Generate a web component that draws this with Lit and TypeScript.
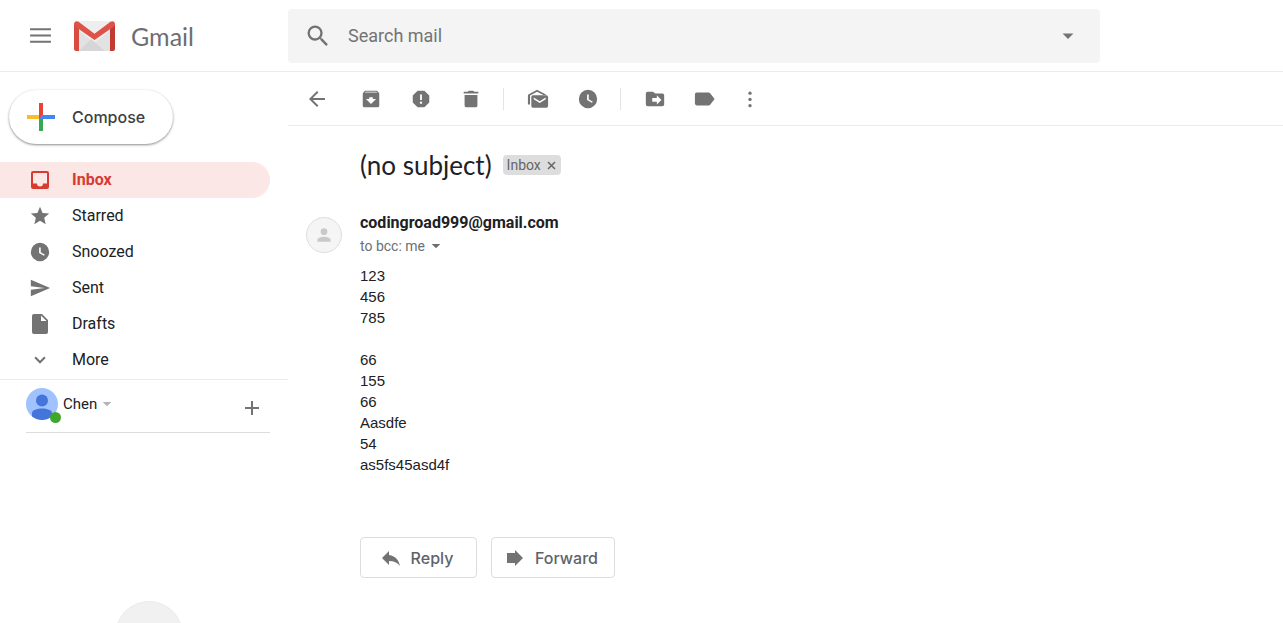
import { LitElement, html, css, svg } from "lit";
import { customElement, property } from "lit/decorators.js";
import { classMap } from "lit/directives/class-map.js";

const paths: Record<string, unknown> = {
  menu: svg`<path d="M2 5h20v2H2zM2 11h20v2H2zM2 17h20v2H2z"/>`,
  search: svg`<path d="M15.5 14h-.79l-.28-.27A6.47 6.47 0 0 0 16 9.5 6.5 6.5 0 1 0 9.5 16c1.61 0 3.09-.59 4.23-1.57l.27.28v.79l5 4.99L20.49 19l-4.99-5zm-6 0a4.5 4.5 0 1 1 0-9 4.5 4.5 0 0 1 0 9z"/>`,
  caret: svg`<path d="M5.500 9h13l-6.500 6.500z"/>`,
  back: svg`<path d="M20 11H7.800l5.600-5.600L12 4l-8 8 8 8 1.400-1.400L7.800 13H20z"/>`,
  archive: svg`<path fill-rule="evenodd" d="M20.500 5.200l-1.400-1.700C18.900 3.200 18.500 3 18 3H6c-.5 0-.9.200-1.200.500L3.500 5.200C3.200 5.600 3 6 3 6.500V19a2 2 0 0 0 2 2h14a2 2 0 0 0 2-2V6.500c0-.5-.2-.9-.5-1.300zM12 17.500L6.500 12H10v-2h4v2h3.500zM5.100 5l.8-1h12l.9 1z"/>`,
  spam: svg`<path fill-rule="evenodd" d="M15.700 3H8.300L3 8.300v7.400L8.300 21h7.400l5.300-5.300V8.300zM12 17.300a1.300 1.300 0 1 1 0-2.600 1.300 1.300 0 0 1 0 2.600zm1-4.300h-2V7h2z"/>`,
  trash: svg`<path d="M5 7.500h14V19a2 2 0 0 1-2 2H7a2 2 0 0 1-2-2zM20 4h-4.500l-1-1h-5l-1 1H4v2h16z"/>`,
  unread: svg`<path d="M3.300 18H1V8.200c0-.7.300-1.200.9-1.500L11 1.800l9 4.900c.4.200.6.500.8.900h-3L11 4 3.300 8.200z"/><path fill-rule="evenodd" d="M6.500 8h14.700A1.800 1.800 0 0 1 23 9.800v9.900a1.800 1.800 0 0 1-1.800 1.800H6.500a1.800 1.800 0 0 1-1.800-1.800V9.800A1.800 1.800 0 0 1 6.500 8zm7.400 6.400L7.300 10.300v1.900l6.600 4.100 6.500-4.100v-1.900z"/>`,
  clock: svg`<path fill-rule="evenodd" d="M12 2a10 10 0 1 0 0 20 10 10 0 0 0 0-20zm4.200 14.200L11 13V7h1.800v5.200l4.500 2.700z"/>`,
  move: svg`<path fill-rule="evenodd" d="M20 6h-8l-2-2H4a2 2 0 0 0-2 2v12a2 2 0 0 0 2 2h16a2 2 0 0 0 2-2V8a2 2 0 0 0-2-2zm-6 12v-3H9v-4h5V8l5 5z"/>`,
  tag: svg`<path d="M17.600 5.800A2 2 0 0 0 16 5H3a2 2 0 0 0-2 2v10a2 2 0 0 0 2 2h13c.7 0 1.300-.3 1.600-.8L22.500 12z"/>`,
  more: svg`<circle cx="12" cy="5" r="2"/><circle cx="12" cy="12.500" r="2"/><circle cx="12" cy="20" r="2"/>`,
  inbox: svg`<path fill-rule="evenodd" d="M19 3H5a2 2 0 0 0-2 2v14a2 2 0 0 0 2 2h14a2 2 0 0 0 2-2V5a2 2 0 0 0-2-2zm0 12.500h-4a3 3 0 0 1-6 0H5V5h14z"/>`,
  star: svg`<path d="M12 17.300L18.200 21l-1.600-7L22 9.200l-7.200-.6L12 2 9.200 8.600 2 9.200 7.500 14l-1.700 7z"/>`,
  sent: svg`<path d="M2 21L23 12 2 3v7l15 2-15 2z"/>`,
  draft: svg`<path fill-rule="evenodd" d="M14 2H6a2 2 0 0 0-2 2v16a2 2 0 0 0 2 2h12a2 2 0 0 0 2-2V8zm-1 7V3.500L18.500 9z"/>`,
  chevron: svg`<path d="M16.600 8.200L12 12.800 7.400 8.200 5.800 9.800l6.200 6.200 6.200-6.200z"/>`,
  plus: svg`<path d="M19 13h-6v6h-2v-6H5v-2h6V5h2v6h6z"/>`,
  person: svg`<circle cx="12" cy="8" r="4"/><path d="M12 14c-2.700 0-8 1.300-8 4v2h16v-2c0-2.700-5.300-4-8-4z"/>`,
  reply: svg`<path d="M10 9V5l-7 7 7 7v-4.100c5 0 8.500 1.600 11 5.100-1-5-4-10-11-11z"/>`,
  forward: svg`<path d="M4 7h8V4l8 8-8 8v-3H4z"/>`,
};

@customElement("mail-icon")
class MailIcon extends LitElement {
  @property() name = "";

  static styles = css`
    :host { display: inline-block; flex: none; width: 20px; height: 20px; }
    .glyph { display: block; width: 100%; height: 100%; fill: currentColor; }
  `;

  render() {
    return html`<svg class="glyph" viewBox="0 0 24 24" aria-hidden="true">${paths[this.name]}</svg>`;
  }
}

@customElement("app-root")
class AppRoot extends LitElement {
  folders = [
    ["inbox", "Inbox"],
    ["star", "Starred"],
    ["clock", "Snoozed"],
    ["sent", "Sent"],
    ["draft", "Drafts"],
  ];

  tools = [
    [["archive", "Archive"], ["spam", "Report spam"], ["trash", "Delete"]],
    [["unread", "Mark as unread"], ["clock", "Snooze"]],
    [["move", "Move to"], ["tag", "Labels"]],
  ];

  body = ["123", "456", "785", "", "66", "155", "66", "Aasdfe", "54", "as5fs45asd4f"];

  static styles = css`
    :host {
      display: flex;
      flex-direction: column;
      height: 100vh;
      overflow: hidden;
      background: #fff;
      color: #202124;
      font: 16px/20px Roboto, sans-serif;
    }
    * { box-sizing: border-box; }
    button, input { font: inherit; color: inherit; background: none; border: 0; padding: 0; margin: 0; }
    button { cursor: pointer; }
    .icon-btn {
      display: flex; align-items: center; justify-content: center;
      width: 40px; height: 40px; color: #737373;
    }
    .header {
      display: flex; align-items: center; flex: none;
      height: 72px; border-bottom: 1px solid #ebebeb;
    }
    .brand { display: flex; align-items: center; flex: none; width: 288px; padding-left: 20px; }
    .menu mail-icon { width: 25px; height: 25px; }
    .logo-link { display: flex; align-items: center; gap: 16px; margin-left: 14px; color: #6b6f74; text-decoration: none; }
    .logo { display: block; width: 41px; height: 30px; }
    .logo-text { font: 25px/32px Lato, sans-serif; }
    .search {
      display: flex; align-items: center; flex: 1; max-width: 812px; height: 54px;
      padding: 0 12px 0 16px; border-radius: 4px; background: #f4f4f4; color: #737373;
    }
    .search-label { display: flex; }
    .search-label mail-icon { width: 28px; height: 28px; }
    .search-input { flex: 1; min-width: 0; margin-left: 16px; font-size: 18px; line-height: 24px; outline: 0; }
    .search-input::placeholder { color: #737373; opacity: 1; }
    .main { display: flex; flex: 1; min-height: 0; }
    .sidebar { display: flex; flex-direction: column; flex: none; width: 288px; overflow: hidden; }
    .compose {
      display: flex; align-items: center; gap: 17px; align-self: flex-start;
      height: 54px; margin: 18px 0 18px 9px; padding: 0 28px 0 18px;
      border-radius: 27px; color: #3c4043; font: 500 16px/24px Inter, sans-serif;
      box-shadow: 0 1px 2px rgba(60, 64, 67, 0.4), 0 1px 3px rgba(60, 64, 67, 0.25);
    }
    .compose-plus { width: 28px; height: 28px; }
    .nav { display: flex; flex-direction: column; flex: none; padding-bottom: 1px; }
    .nav-item {
      display: flex; align-items: center; gap: 20px; height: 36px; margin-right: 18px;
      padding-left: 28px; border-radius: 0 18px 18px 0; color: #202124; text-decoration: none;
    }
    .nav-item mail-icon { width: 24px; height: 22px; color: #737373; }
    .nav-item .tall { height: 24px; }
    .nav-item.active, .nav-item.active mail-icon { color: #d93a30; }
    .nav-item.active { background: #fbe7e6; font-weight: 700; }
    .chat {
      display: flex; align-items: center; flex: none; height: 53px;
      margin: 0 18px 0 26px; padding-bottom: 4px; border-bottom: 1px solid #dcdcdc;
    }
    .divider { flex: none; height: 1px; background: #ebebeb; }
    .avatar { position: relative; width: 32px; height: 32px; }
    .avatar-art { display: block; width: 32px; height: 32px; }
    .status { position: absolute; right: -3px; bottom: -3px; width: 11px; height: 11px; border-radius: 50%; background: #3fa82b; }
    .account { display: flex; align-items: center; gap: 2px; margin-left: 5px; font-size: 15px; }
    .account mail-icon { width: 16px; height: 16px; color: #b4b4b4; }
    .add { align-self: flex-end; margin-left: auto; width: 36px; }
    .add mail-icon, .icon-btn.back mail-icon { width: 24px; height: 24px; }
    .bubble { flex: none; align-self: center; width: 68px; height: 68px; margin: auto 0 -46px 10px; border-radius: 50%; background: #f1f1f1; border: 1px solid #ebebeb; }
    .content { flex: 1; min-width: 0; overflow: hidden; }
    .toolbar { display: flex; align-items: center; height: 54px; padding-left: 9px; border-bottom: 1px solid #ebebeb; }
    .group { display: flex; gap: 10px; padding: 0 12px 0 14px; }
    .group + .group { padding-left: 15px; position: relative; }
    .group + .group::before { content: ""; position: absolute; left: 0; top: 9px; height: 22px; width: 1px; background: #e4e4e4; }
    .group mail-icon { width: 22px; height: 22px; }
    .kebab { margin-left: -7px; }
    .subject { display: flex; align-items: center; gap: 11px; padding: 23px 0 0 72px; }
    .subject-text { margin: 0; font: 400 26px/32px Lato, sans-serif; }
    .label { display: flex; align-items: center; gap: 6px; height: 20px; padding: 0 5px 0 4px; border-radius: 4px; background: #ddd; color: #666; font-size: 14px; }
    .label-x { display: flex; }
    .cross { display: block; width: 9px; height: 9px; stroke: #666; stroke-width: 1.5; }
    .message { display: grid; grid-template-columns: 36px 1fr; column-gap: 18px; padding: 31px 16px 0 18px; }
    .sender-pic {
      display: flex; align-items: center; justify-content: center;
      width: 36px; height: 36px; margin-top: 5px; border-radius: 50%;
      background: #f5f5f5; border: 1px solid #dedede; color: #c9c9c9;
    }
    .sender { margin: 0; font-size: 16px; line-height: 22px; font-weight: 700; }
    .to { display: flex; align-items: center; gap: 3px; height: 24px; color: #6b6f74; font-size: 14px; }
    .to mail-icon { width: 16px; height: 16px; }
    .text { margin-top: 7px; font: 15px/21px "Liberation Sans", Arial, sans-serif; }
    .line { min-height: 21px; }
    .actions { display: flex; gap: 14px; margin-top: 62px; }
    .action {
      display: flex; align-items: center; justify-content: center; gap: 8px;
      min-width: 117px; height: 41px; padding: 0 16px 0 11px; border: 1px solid #dadce0;
      border-radius: 4px; color: #5f6368; font: 500 16px/24px Inter, sans-serif;
    }
    .action mail-icon { width: 24px; height: 24px; color: #737373; }
  `;

  render() {
    return html`
      <header class="header">
        <div class="brand">
          <button class="icon-btn menu" aria-label="Main menu"><mail-icon name="menu"></mail-icon></button>
          <a class="logo-link" href="#inbox">
            <svg class="logo" viewBox="0 0 41 30" aria-hidden="true">
              <rect x="1" y="0" width="39" height="30" rx="2" fill="#eee"/>
              <path d="M4 9l16.500 13L37 9v21H4z" fill="#e2e2e2"/>
              <path d="M5 30L17 18l14 12z" fill="#d6d6d6"/>
              <path d="M0 3v25a2 2 0 0 0 2 2h3V8z" fill="#d84b40"/>
              <path d="M41 3v25a2 2 0 0 1-2 2h-3V8z" fill="#c23a31"/>
              <path d="M0 3C0 .5 2.500-.6 4.500.8l16 12 16-12C38.500-.6 41 .5 41 3c0 1-.5 2-1.500 2.700l-19 13.300-19-13.300C.5 5 0 4 0 3z" fill="#de5247"/>
            </svg>
            <span class="logo-text">Gmail</span>
          </a>
        </div>
        <form class="search" role="search">
          <label class="search-label" for="q" aria-label="Search mail"><mail-icon name="search"></mail-icon></label>
          <input class="search-input" id="q" type="text" placeholder="Search mail" />
          <button class="icon-btn" type="button" aria-label="Search options"><mail-icon name="caret"></mail-icon></button>
        </form>
      </header>
      <div class="main">
        <aside class="sidebar">
          <button class="compose">
            <svg class="compose-plus" viewBox="0 0 28 28" aria-hidden="true">
              <path d="M0 12h12l4 4H0z" fill="#fbbc2c"/>
              <path d="M12 16l4-4v16h-4z" fill="#34a853"/>
              <path d="M16 12h12v4H12z" fill="#4285f4"/>
              <path d="M12 0h4v12l-4 4z" fill="#ea4335"/>
            </svg>
            <span>Compose</span>
          </button>
          <nav class="nav">
            ${this.folders.map(([icon, text], i) => html`
              <a class=${classMap({ "nav-item": true, active: i === 0 })} href="#${text.toLowerCase()}">
                <mail-icon class=${classMap({ tall: icon === "inbox" || icon === "draft" })} name=${icon}></mail-icon><span>${text}</span>
              </a>`)}
            <button class="nav-item"><mail-icon name="chevron"></mail-icon><span>More</span></button>
          </nav>
          <div class="divider"></div>
          <div class="chat">
            <div class="avatar">
              <svg class="avatar-art" viewBox="0 0 32 32" aria-hidden="true">
                <circle cx="16" cy="16" r="16" fill="#a0c3ff"/>
                <circle cx="16" cy="12.500" r="6" fill="#4375db"/>
                <path d="M6 28.500v-3.500c0-3 5-4.500 10-4.500s10 1.500 10 4.500v3.500a16 16 0 0 1-20 0z" fill="#4375db"/>
              </svg>
              <span class="status"></span>
            </div>
            <button class="account"><span>Chen</span><mail-icon name="caret"></mail-icon></button>
            <button class="icon-btn add" aria-label="New conversation"><mail-icon name="plus"></mail-icon></button>
          </div>
          <div class="bubble"></div>
        </aside>
        <main class="content">
          <div class="toolbar">
            <button class="icon-btn back" aria-label="Back to Inbox"><mail-icon name="back"></mail-icon></button>
            ${this.tools.map((group) => html`
              <div class="group">
                ${group.map(([icon, text]) => html`
                  <button class="icon-btn" aria-label=${text}><mail-icon name=${icon}></mail-icon></button>`)}
              </div>`)}
            <button class="icon-btn kebab" aria-label="More"><mail-icon name="more"></mail-icon></button>
          </div>
          <div class="subject">
            <h1 class="subject-text">(no subject)</h1>
            <div class="label">
              <span>Inbox</span>
              <button class="label-x" aria-label="Remove label Inbox">
                <svg class="cross" viewBox="0 0 9 9"><path d="M1 1l7 7M8 1L1 8"/></svg>
              </button>
            </div>
          </div>
          <article class="message">
            <div class="sender-pic"><mail-icon name="person"></mail-icon></div>
            <div>
              <h2 class="sender">codingroad999@gmail.com</h2>
              <button class="to"><span>to bcc: me</span><mail-icon name="caret"></mail-icon></button>
              <div class="text">${this.body.map((line) => html`<div class="line">${line}</div>`)}</div>
              <div class="actions">
                <button class="action"><mail-icon name="reply"></mail-icon><span>Reply</span></button>
                <button class="action"><mail-icon name="forward"></mail-icon><span>Forward</span></button>
              </div>
            </div>
          </article>
        </main>
      </div>
    `;
  }
}
